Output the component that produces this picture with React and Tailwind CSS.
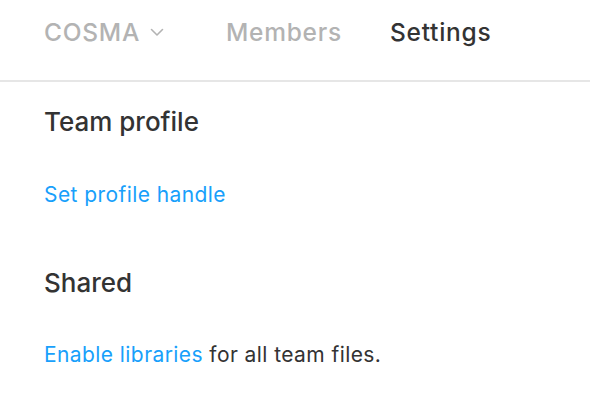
const tabs = [
    { label: 'Members', active: false, width: 'w-[164px]' },
    { label: 'Settings', active: true, width: '' },
];

const Chevron = () => (
    <svg width="14" height="9" viewBox="0 0 14 9" fill="none" className="ml-[10px] mt-[1px]">
        <path d="M1.5 1.5 L7 7 L12.5 1.5" stroke="#b3b3b3" strokeWidth="1.6" strokeLinecap="round" strokeLinejoin="round" />
    </svg>
);

export default function App() {
    return (
        <div className="w-[590px] h-[404px] bg-white overflow-hidden" style={{ fontFamily: 'Inter, "Noto Sans", sans-serif' }}>
            <div className="flex items-start h-[82px] border-b-2 border-[#e6e6e6] px-[44px] pt-[16px]">
                <div className="flex items-center w-[182px] h-[32px] text-[24.5px] leading-[32px] font-medium tracking-[0.03em] text-[#b3b3b3]">
                    <span>COSMA</span>
                    <Chevron />
                </div>
                {tabs.map(t => (
                    <span
                        key={t.label}
                        className={`${t.width} text-[24.5px] leading-[32px] font-medium tracking-[0.03em] ${t.active ? 'text-[#333333]' : 'text-[#b3b3b3]'}`}
                    >
                        {t.label}
                    </span>
                ))}
            </div>
            <div className="px-[44px]">
                <h2 className="text-[26px] font-medium text-[#333333] mt-[24px] leading-[32px]">Team profile</h2>
                <a className="block text-[21px] tracking-[0.02em] text-[#18a0fb] mt-[43px] leading-[28px]">Set profile handle</a>
                <h2 className="text-[26px] font-medium text-[#333333] mt-[58px] leading-[32px]">Shared</h2>
                <p className="text-[21px] tracking-[0.02em] text-[#333333] mt-[42px] leading-[28px]">
                    <span className="text-[#18a0fb]">Enable libraries</span> for all team files.
                </p>
            </div>
        </div>
    );
}
